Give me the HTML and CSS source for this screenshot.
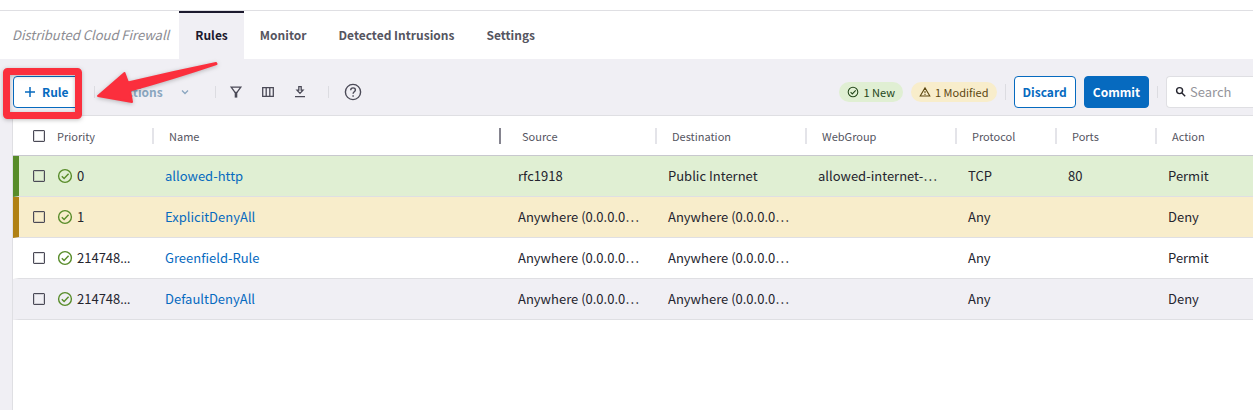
FILE: index.html
```html
<!DOCTYPE html>
<html lang="en">
<head>
<meta charset="utf-8">
<meta name="viewport" content="width=device-width, initial-scale=1">
<title>Distributed Cloud Firewall</title>
<link rel="stylesheet" href="styles.css">
</head>
<body>
<svg width="0" height="0" class="defs" aria-hidden="true">
  <symbol id="check" viewBox="0 0 16 16"><circle cx="8" cy="8" r="6.4"/><path d="M4.8 8.3 7.1 10.6 11.6 5.8"/></symbol>
</svg>
<header class="top">
  <h1 class="title">Distributed Cloud Firewall</h1>
  <nav class="tabs">
    <a class="tab active" href="#rules">Rules</a>
    <a class="tab" href="#monitor">Monitor</a>
    <a class="tab" href="#intrusions">Detected Intrusions</a>
    <a class="tab" href="#settings">Settings</a>
  </nav>
</header>
<main class="page">
  <div class="toolbar">
    <button class="btn outline add" type="button">
      <svg class="plus" viewBox="0 0 10 10"><path d="M5 0V10M0 5H10"/></svg>Rule
    </button>
    <span class="sep"></span>
    <button class="actions" type="button" disabled>Actions
      <svg class="chevron" viewBox="0 0 8 8"><path d="M1 2.5 4 5.5 7 2.5"/></svg>
    </button>
    <span class="sep"></span>
    <div class="tools">
      <button class="icon-btn" type="button" aria-label="Filter"><svg viewBox="0 0 16 16"><path d="M3.2 3.2H12.800L9 8.300H7Z"/><path d="M8 8V13.600" stroke-width="2.600"/></svg></button>
      <button class="icon-btn" type="button" aria-label="Columns"><svg viewBox="0 0 16 16"><path d="M2.7 3.7H13.3V12.3H2.7ZM6.2 3.7V12.3M9.8 3.7V12.3"/></svg></button>
      <button class="icon-btn" type="button" aria-label="Download"><svg viewBox="0 0 16 16"><path d="M6.8 2.7H9.2V6.2H11L8 9.4 5 6.2H6.8ZM3 12.6H13"/></svg></button>
    </div>
    <span class="sep"></span>
    <button class="icon-btn help" type="button" aria-label="Help"><svg viewBox="0 0 18 18"><circle cx="9" cy="9" r="7.6"/><path d="M6.7 7.3C6.7 4.1 11.5 4.2 11.4 7 11.3 8.8 9.1 8.9 9.1 10.8M9.1 12.2V13.8"/></svg></button>
    <div class="right">
      <span class="pill new"><svg viewBox="0 0 16 16"><use href="#check"/></svg>1 New</span>
      <span class="pill modified"><svg viewBox="0 0 16 16"><path d="M8 2.5 14.4 13.4H1.6ZM8 6.5V9.6M8 10.6V12"/></svg>1 Modified</span>
      <span class="sep tall"></span>
      <button class="btn outline discard" type="button">Discard</button>
      <button class="btn primary" type="button">Commit</button>
      <span class="sep"></span>
      <label class="search">
        <svg viewBox="0 0 12 12"><circle cx="4.6" cy="4.6" r="3"/><path d="M6.9 6.9 10.2 10.2"/></svg>
        <input type="text" placeholder="Search" aria-label="Search">
      </label>
    </div>
  </div>
  <div class="grid">
    <table>
      <colgroup><col class="c-check"><col class="c-priority"><col><col class="c-wide"><col class="c-wide"><col class="c-wide"><col class="c-small"><col class="c-small"><col class="c-last"></colgroup>
      <thead>
        <tr><th class="check"><input type="checkbox" aria-label="Select all"></th><th class="priority">Priority</th><th class="split pinned">Name</th><th>Source</th><th class="split">Destination</th><th class="split">WebGroup</th><th class="split">Protocol</th><th class="split">Ports</th><th class="split">Action</th></tr>
      </thead>
      <tbody>
        <tr class="added"><td class="check"><input type="checkbox" aria-label="Select allowed-http"></td><td class="priority"><svg viewBox="0 0 16 16"><use href="#check"/></svg>0</td><td><a href="#r0">allowed-http</a></td><td>rfc1918</td><td>Public Internet</td><td>allowed-internet-…</td><td>TCP</td><td>80</td><td>Permit</td></tr>
        <tr class="changed"><td class="check"><input type="checkbox" aria-label="Select ExplicitDenyAll"></td><td class="priority"><svg viewBox="0 0 16 16"><use href="#check"/></svg>1</td><td><a href="#r1">ExplicitDenyAll</a></td><td>Anywhere (0.0.0.0…</td><td>Anywhere (0.0.0.0…</td><td></td><td>Any</td><td></td><td>Deny</td></tr>
        <tr><td class="check"><input type="checkbox" aria-label="Select Greenfield-Rule"></td><td class="priority"><svg viewBox="0 0 16 16"><use href="#check"/></svg>214748<span class="more">…</span></td><td><a href="#r2">Greenfield-Rule</a></td><td>Anywhere (0.0.0.0…</td><td>Anywhere (0.0.0.0…</td><td></td><td>Any</td><td></td><td>Permit</td></tr>
        <tr class="default"><td class="check"><input type="checkbox" aria-label="Select DefaultDenyAll"></td><td class="priority"><svg viewBox="0 0 16 16"><use href="#check"/></svg>214748<span class="more">…</span></td><td><a href="#r3">DefaultDenyAll</a></td><td>Anywhere (0.0.0.0…</td><td>Anywhere (0.0.0.0…</td><td></td><td>Any</td><td></td><td>Deny</td></tr>
      </tbody>
    </table>
  </div>
  <svg class="callout" viewBox="0 0 230 70" aria-hidden="true">
    <rect x="6.5" y="12.5" width="72" height="44" rx="1"/>
    <path class="arrow" d="M98 37 124.500 14 128 23.500 Q172 13 216 4 L216.500 5 Q172 20 130 31.500 L132 43Z"/>
  </svg>
</main>
</body>
</html>
```
FILE: styles.css
```css
* { box-sizing: border-box; }
body {
  margin: 0;
  min-height: 100vh;
  display: flex;
  flex-direction: column;
  background: #f0eff4;
  color: #24242e;
  font: 13px/20px "Noto Sans CJK KR", "Noto Sans CJK SC", sans-serif;
}
button, input { font: inherit; margin: 0; }
svg { fill: none; stroke: currentColor; flex: none; }
.defs { position: absolute; }
a { color: #066abf; text-decoration: none; }

.top {
  display: flex;
  background: #fff;
  padding: 1px 12px 0;
  border-top: 10px solid #fff;
  box-shadow: inset 0 1px #dfdfe3;
}
.title { margin: 0 10px 0 0; font-size: 13px; font-weight: 400; font-style: italic; line-height: 48px; color: #8c8c92; }
.tabs { display: flex; }
.tab { padding: 0 16px; font-size: 12px; line-height: 44px; border-top: 2px solid transparent; border-bottom: 2px solid transparent; color: #55555f; font-weight: 600; }
.tab.active { background: #f0eff4; border-top-color: #1c1a2e; border-bottom-color: #f0eff4; color: #1c1a2e; }

.page { position: relative; flex: 1; display: flex; flex-direction: column; padding-left: 12px; }
.toolbar { display: flex; align-items: center; padding: 17px 0 7px 1px; }
.btn { height: 32px; padding: 0 8px; border: 1px solid #066abf; border-radius: 4px; font-weight: 600; font-size: 12px; white-space: nowrap; }
.outline { background: #fff; color: #066abf; }
.primary { background: #066abf; color: #fff; }
.add { display: flex; align-items: center; gap: 7px; width: 68px; padding: 0 11px; }
.plus { width: 10px; height: 10px; stroke-width: 1.5; }
.sep { flex: none; width: 1px; height: 12px; background: #dcdce1; }
.sep.tall { height: 16px; margin: 0 8px; }
.add + .sep { margin-left: 13px; }
.actions { display: flex; align-items: center; gap: 18px; margin: 0 26px 0 24px; padding: 0; border: 0; background: none; color: #8aa6bf; font-weight: 600; font-size: 12px; }
.chevron { width: 8px; height: 8px; stroke-width: 1.3; }
.tools { display: flex; gap: 16px; margin: 0 20px 0 12px; }
.icon-btn { display: flex; padding: 0; border: 0; background: none; color: #4b4a57; }
.icon-btn svg { width: 16px; height: 16px; stroke-width: 1.3; }
.icon-btn.help { margin-left: 15px; }
.help svg { width: 18px; height: 18px; stroke-width: 1.4; }
.right { display: flex; align-items: center; margin-left: auto; }
.pill { display: flex; align-items: center; gap: 4px; height: 20px; padding: 0 8px; border-radius: 10px; font-size: 11px; white-space: nowrap; }
.pill svg { width: 12px; height: 12px; stroke-width: 1.4; }
.new { background: #e0efd3; color: #23461a; margin-right: 8px; }
.modified { background: #f8edcb; color: #5c4710; }
.discard { margin-right: 8px; }
.primary + .sep { margin: 0 8px; }
.search { display: flex; align-items: center; gap: 3px; width: 87px; height: 32px; padding-left: 8px; background: #fff; border: 1px solid #dfdfe3; border-right: 0; border-radius: 4px 0 0 4px; }
.search svg { width: 12px; height: 12px; stroke-width: 1.4; }
.search input { width: 100%; min-width: 0; padding: 0; border: 0; outline: 0; background: none; }
.search input::placeholder { color: #94949b; opacity: 1; }

.grid { flex: 1; background: #fff; border: 1px solid #dfdfe3; border-width: 1px 0 0 1px; }
table { width: 100%; table-layout: fixed; border-collapse: separate; border-spacing: 0; }
.c-check { width: 44px; }
.c-priority { width: 95px; }
.c-wide { width: 150px; }
.c-small { width: 100px; }
.c-last { width: 98px; }
th, td { height: 41px; padding: 0 0 0 13px; text-align: left; white-space: nowrap; border-bottom: 1px solid #dfdfe3; }
th { height: 40px; padding-left: 17px; font-size: 11px; font-weight: 400; color: #55555f; border-bottom-color: #c8c8ce; }
.split { background: linear-gradient(#e4e4e9, #e4e4e9) left / 2px 16px no-repeat; }
.pinned { background: linear-gradient(#e4e4e9, #e4e4e9) left / 2px 16px no-repeat, linear-gradient(#85848f, #85848f) right 4px center / 2px 16px no-repeat; }
.check { padding-left: 20px; }
td.check { padding-left: 14px; border-left: 6px solid transparent; }
.check input { appearance: none; display: block; width: 12px; height: 12px; border: 1px solid #4b4a57; border-radius: 1px; box-shadow: inset 0 0 0 1px rgba(75, 74, 87, .2); }
.priority { padding-left: 0; }
td.priority svg { width: 16px; height: 16px; margin-right: 4px; vertical-align: -3px; color: #588c2a; stroke-width: 1.4; }
.more { font-family: "Open Sans", sans-serif; line-height: 1; }
.added td { background-color: #e0efd3; }
.changed td { background-color: #f8edcb; }
.default td { background-color: #f0eff4; }
.added .check { border-left-color: #588c2a; }
.changed .check { border-left-color: #b08114; }

.callout { position: absolute; left: 0; top: 0; width: 230px; height: 70px; pointer-events: none; filter: drop-shadow(0 1px 2px rgba(0, 0, 0, .25)); color: #fb2f3d; }
.callout rect { stroke-width: 7; }
.callout .arrow { fill: currentColor; stroke-width: 2; stroke-linejoin: round; }
```
